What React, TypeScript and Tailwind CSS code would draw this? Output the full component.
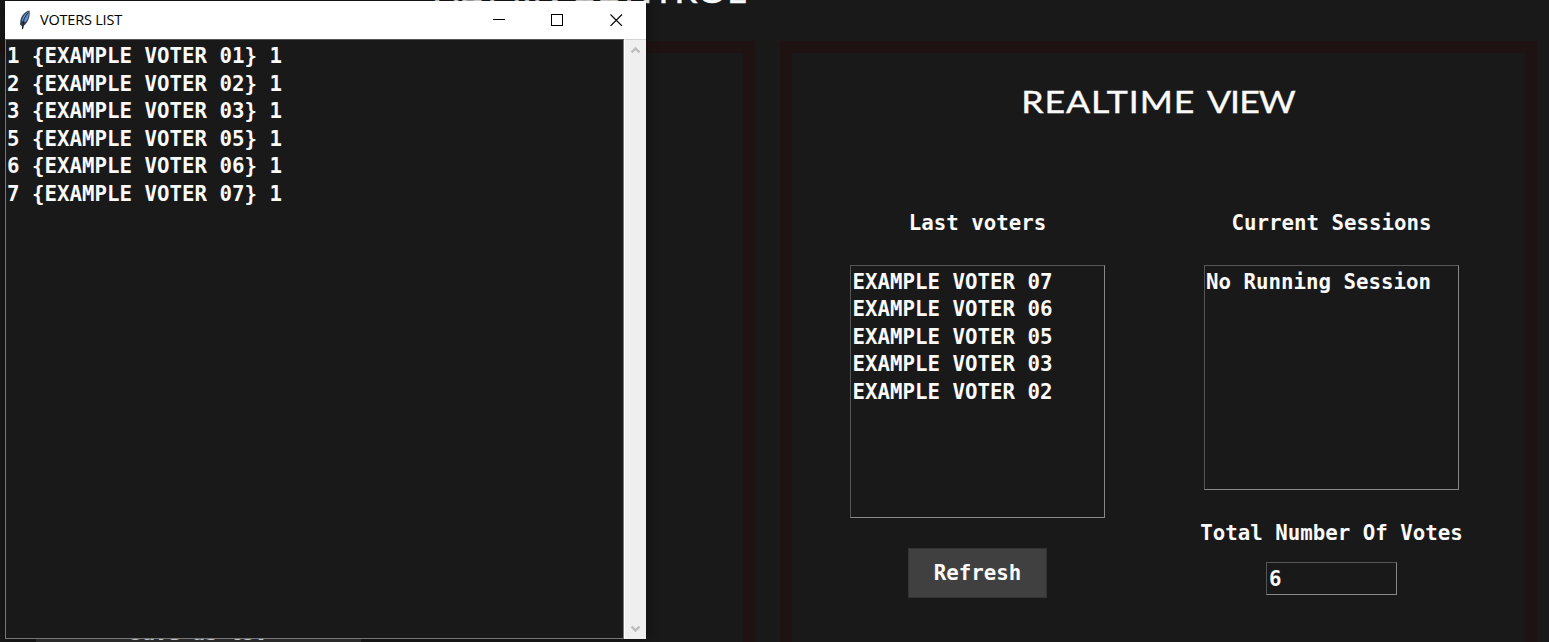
import React from "react";

const voters = ["1 {EXAMPLE VOTER 01} 1", "2 {EXAMPLE VOTER 02} 1", "3 {EXAMPLE VOTER 03} 1", "5 {EXAMPLE VOTER 05} 1", "6 {EXAMPLE VOTER 06} 1", "7 {EXAMPLE VOTER 07} 1"];
const lastVoters = ["EXAMPLE VOTER 07", "EXAMPLE VOTER 06", "EXAMPLE VOTER 05", "EXAMPLE VOTER 03", "EXAMPLE VOTER 02"];

function Rows({ items }: { items: string[] }) {
  return (
    <div>
      {items.map((item) => (
        <div key={item} className="h-[27.5px] whitespace-pre">{item}</div>
      ))}
    </div>
  );
}

function Feather() {
  return (
    <svg className="h-5 w-3" viewBox="0 0 12 20">
      <path d="M10.5 0.5C7 1 2.5 5 1.5 10L1 14.5L3 16L3 19.5L4 19L5 15.5C8.5 13 11.5 7 10.5 0.5Z" fill="#333d4b" />
      <path d="M9.5 1.5C6.5 3 3.5 6.5 2.8 11L6.5 12C9 9.5 10.3 5 9.5 1.5Z" fill="#5f93d2" />
      <path d="M9 2.5L5 9L3.3 19" fill="none" stroke="#1a1e25" strokeWidth="0.9" />
    </svg>
  );
}

function VotersWindow() {
  return (
    <section className="absolute left-[5px] top-px flex h-[638px] w-[641px] flex-col bg-white shadow-[0_0_12px_rgba(0,0,0,0.45)]">
      <header className="flex h-[38px] shrink-0 items-center pl-[14px] text-black">
        <Feather />
        <h1 className="ml-[9px] w-[85px] whitespace-nowrap font-['Open_Sans','Noto_Sans',sans-serif] text-[14.5px] font-normal leading-5 tracking-[-0.2px]">VOTERS LIST</h1>
        <svg className="ml-auto mr-[23px] h-3 w-[130px]" viewBox="0 0 130 12" fill="none" stroke="black">
          <path d="M0 5.5H12M58.5 .5H69.5V11.5H58.5Z" shapeRendering="crispEdges" />
          <path d="M117.5 .5L129 12M129 .5L117.5 12" strokeWidth="1.1" />
        </svg>
      </header>
      <div className="flex min-h-0 grow">
        <div className="grow border border-[#777] border-t-[#555] bg-[#191919] pl-px pt-[3px]">
          <Rows items={voters} />
        </div>
        <div className="flex w-[22px] flex-col items-center justify-between border-l border-t border-l-white border-t-[#d4d4d4] bg-[#efefef] py-[6px]">
          <svg className="h-2 w-[9px]" viewBox="0 0 9 8" fill="none" stroke="#bdbdbd" strokeWidth="2.4"><path d="M.5 6.5L4.5 2.5L8.5 6.5" /></svg>
          <svg className="h-2 w-[9px]" viewBox="0 0 9 8" fill="none" stroke="#bdbdbd" strokeWidth="2.4"><path d="M.5 1.5L4.5 5.5L8.5 1.5" /></svg>
        </div>
      </div>
    </section>
  );
}

export default function App() {
  return (
    <main className="relative h-[642px] w-full overflow-hidden bg-[#191919] font-['DejaVu_Sans_Mono',monospace] text-[20.77px] font-bold leading-[27.5px] text-[#fafafa]">
      <div className="flex h-full gap-[25px] pt-[41px]">
        <section className="h-[640px] w-[755px] shrink-0 border-[12px] border-l-0 border-[#1e1312]" />
        <section className="h-[640px] w-[757px] shrink-0 border-[12px] border-[#1e1312] pt-[32px]">
          <div className="flex h-[32px] justify-center">
            <h2 className="origin-center scale-x-[1.15] whitespace-nowrap font-['Lato',sans-serif] text-[31px] font-normal leading-8 [-webkit-text-stroke:0.4px_#fafafa]">
              <span className="tracking-[0.8px]">REALTIME</span><span className="tracking-[-0.8px]"> </span><span className="ml-[3px] tracking-[-0.8px]">VIEW</span>
            </h2>
          </div>
          <div className="flex gap-[99px] pl-[58px] pt-[93px]">
            <div className="flex w-[255px] flex-col items-center">
              <h3>Last voters</h3>
              <div className="mt-[27px] h-[253px] w-full border border-[#555] border-b-[#888] border-r-[#888] pl-[1.5px] pt-[3px]"><Rows items={lastVoters} /></div>
              <button className="mt-[30px] h-[50px] w-[139px] border border-[#333] bg-[#404040] pt-[2px]">Refresh</button>
            </div>
            <div className="flex w-[255px] flex-col items-center whitespace-nowrap">
              <h3>Current Sessions</h3>
              <div className="mt-[27px] h-[225px] w-full border border-[#555] border-b-[#888] border-r-[#888] pl-px pt-[3px]"><Rows items={["No Running Session"]} /></div>
              <h3 className="mt-[30px]">Total Number Of Votes</h3>
              <div className="mt-[15px] h-[33px] w-[131px] border border-[#555] border-b-[#888] border-r-[#888] pl-[2px] pt-[3px]">6</div>
            </div>
          </div>
        </section>
      </div>
      <div className="absolute left-[434px] top-[-29px] origin-left scale-x-[1.16] whitespace-nowrap font-['Lato',sans-serif] text-[32px] font-normal leading-10 [-webkit-text-stroke:0.4px_#fafafa]">ADMIN CONTROL</div>
      <div className="absolute left-[36px] top-[595px] flex h-[47px] w-[325px] items-start justify-center bg-[#333] pt-[25px]">Save as CSV</div>
      <VotersWindow />
    </main>
  );
}
